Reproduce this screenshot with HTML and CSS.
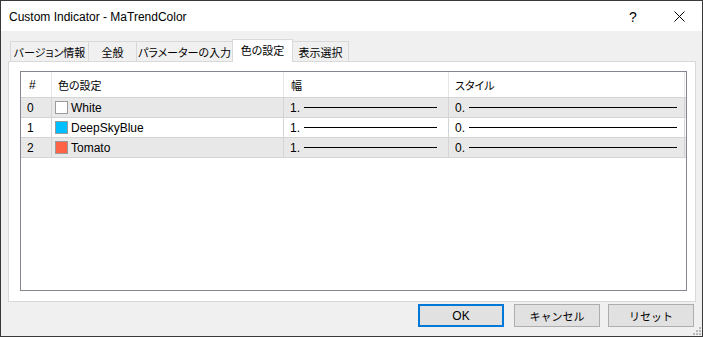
FILE: index.html
```html
<!DOCTYPE html>
<html lang="ja">
<head>
    <meta charset="UTF-8">
    <meta name="viewport" content="width=device-width, initial-scale=1.0">
    <title>Custom Indicator - MaTrendColor</title>
    <link rel="stylesheet" href="styles.css">
</head>
<body>
    <div class="window">
        <div class="titlebar">
            <span class="title">Custom Indicator - MaTrendColor</span>
            <span class="title-btn help">?</span>
            <span class="title-btn close">
                <svg width="11" height="11" viewBox="0 0 11 11"><path d="M0.5 0.5 L10.5 10.5 M10.5 0.5 L0.5 10.5" stroke="#000" stroke-width="1" fill="none"/></svg>
            </span>
        </div>

        <div class="content">
            <div class="tabs">
                <div class="tab t1">バージョン情報</div>
                <div class="tab t2">全般</div>
                <div class="tab t3">パラメーターの入力</div>
                <div class="tab t4 active">色の設定</div>
                <div class="tab t5">表示選択</div>
            </div>

            <div class="panel">
                <div class="listview">
                    <div class="row header">
                        <div class="cell c-num">#</div>
                        <div class="cell c-color ja">色の設定</div>
                        <div class="cell c-width ja">幅</div>
                        <div class="cell c-style ja">スタイル</div>
                    </div>
                    <div class="row shaded">
                        <div class="cell c-num">0</div>
                        <div class="cell c-color"><span class="swatch" style="background:#ffffff"></span>White</div>
                        <div class="cell c-width">1.<span class="line"></span></div>
                        <div class="cell c-style">0.<span class="line"></span></div>
                    </div>
                    <div class="row">
                        <div class="cell c-num">1</div>
                        <div class="cell c-color"><span class="swatch" style="background:#00bfff"></span>DeepSkyBlue</div>
                        <div class="cell c-width">1.<span class="line"></span></div>
                        <div class="cell c-style">0.<span class="line"></span></div>
                    </div>
                    <div class="row shaded">
                        <div class="cell c-num">2</div>
                        <div class="cell c-color"><span class="swatch" style="background:#ff6347"></span>Tomato</div>
                        <div class="cell c-width">1.<span class="line"></span></div>
                        <div class="cell c-style">0.<span class="line"></span></div>
                    </div>
                </div>
            </div>

            <div class="buttons">
                <button class="btn default">OK</button>
                <button class="btn cancel ja">キャンセル</button>
                <button class="btn reset ja">リセット</button>
            </div>
        </div>

        <div class="grip">
            <svg width="8" height="8" viewBox="0 0 8 8" fill="#b8b8b8">
                <rect x="6" y="0" width="2" height="2"/>
                <rect x="3" y="3" width="2" height="2"/>
                <rect x="6" y="3" width="2" height="2"/>
                <rect x="0" y="6" width="2" height="2"/>
                <rect x="3" y="6" width="2" height="2"/>
                <rect x="6" y="6" width="2" height="2"/>
            </svg>
        </div>
    </div>
</body>
</html>
```

FILE: styles.css
```css
body {
    margin: 0;
    background: #f0f0f0;
    font-family: "Liberation Sans", "Noto Sans CJK JP", sans-serif;
    font-size: 12px;
    color: #000;
    font-feature-settings: "palt";
}

.ja {
    font-size: 11px;
}

.window {
    position: relative;
    width: 703px;
    height: 337px;
    box-sizing: border-box;
    border: 1px solid #3a3a3a;
    background: #f0f0f0;
}

/* Title bar */
.titlebar {
    height: 30px;
    background: #fff;
    display: flex;
    align-items: center;
}

.title {
    margin-left: 8px;
    flex: 1;
    font-size: 12px;
    padding-top: 1px;
}

.title-btn {
    width: 46px;
    height: 30px;
    display: flex;
    align-items: center;
    justify-content: center;
}

.help {
    font-size: 14px;
    padding-top: 1px;
    box-sizing: border-box;
}

/* Content */
.content {
    padding: 8px 7px 0 7px;
}

.tabs {
    display: flex;
    align-items: flex-end;
    height: 23px;
    margin-left: 2px;
    margin-bottom: -1px;
    position: relative;
    z-index: 1;
}

.tab {
    height: 20px;
    box-sizing: border-box;
    border: 1px solid #d9d9d9;
    border-bottom: none;
    border-left: none;
    background: #f0f0f0;
    display: flex;
    align-items: center;
    justify-content: center;
    font-size: 11px;
    white-space: nowrap;
    margin-bottom: 1px;
}

.t1 { width: 79px; border-left: 1px solid #d9d9d9; }
.t2 { width: 48px; }
.t3 { width: 96px; }
.t4 { width: 61px; }
.t5 { width: 56px; }

.tab.active {
    height: 23px;
    background: #fff;
    margin-bottom: 0;
    border-left: 1px solid #d9d9d9;
    margin-left: -1px;
    padding-bottom: 2px;
}

.panel {
    width: 688px;
    height: 241px;
    box-sizing: border-box;
    border: 1px solid #d9d9d9;
    background: #fff;
    padding: 9px 0 0 11px;
}

/* List view */
.listview {
    width: 667px;
    height: 220px;
    box-sizing: border-box;
    border: 1px solid #828790;
    background: #fff;
}

.row {
    display: flex;
    height: 20px;
    box-sizing: border-box;
    border-bottom: 1px solid #d4d4d4;
}

.row.header {
    height: 26px;
}

.row.shaded {
    background: #e8e8e8;
}

.cell {
    box-sizing: border-box;
    border-right: 1px solid #d4d4d4;
    display: flex;
    align-items: center;
    white-space: nowrap;
}

.header .cell {
    border-right-color: #e6e6e6;
}

.c-num { width: 31px; padding-left: 6px; }
.c-color { width: 232px; padding-left: 3px; }
.c-width { width: 165px; padding-left: 6px; }
.c-style { width: 236px; padding-left: 6px; }

.header .c-num { padding-left: 8px; }
.header .c-color { padding-left: 6px; }
.header .c-width { padding-left: 7px; }

.swatch {
    width: 13px;
    height: 13px;
    box-sizing: border-box;
    border: 1px solid #9a9a9a;
    margin-right: 3px;
    flex: none;
}

.line {
    flex: 1;
    height: 1px;
    background: #000;
    margin-left: 4px;
}

.c-width .line { margin-right: 11px; }
.c-style .line { margin-right: 7px; }

/* Buttons */
.buttons {
    display: flex;
    justify-content: flex-end;
    margin-top: 2px;
    margin-right: 1px;
}

.btn {
    width: 86px;
    height: 23px;
    box-sizing: border-box;
    border: 1px solid #adadad;
    background: #e1e1e1;
    font-family: inherit;
    font-size: 12px;
    color: #000;
    padding: 0;
}

.btn.ja {
    font-size: 11px;
}

.btn.default {
    border: 2px solid #0078d7;
}

.btn.cancel { margin-left: 10px; }
.btn.reset { margin-left: 8px; }

.grip {
    position: absolute;
    right: 1px;
    bottom: 1px;
    width: 8px;
    height: 8px;
    display: flex;
}
```
